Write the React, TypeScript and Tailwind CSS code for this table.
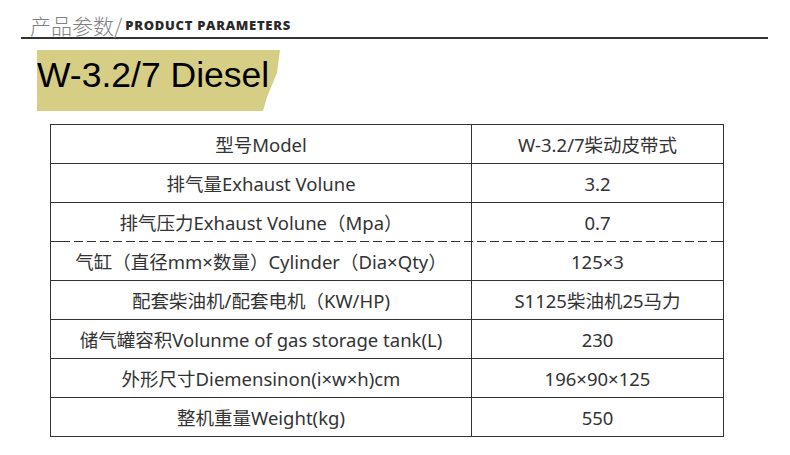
import React from "react";

const rows: [string, string][] = [
  ["型号Model", "W-3.2/7柴动皮带式"],
  ["排气量Exhaust Volune", "3.2"],
  ["排气压力Exhaust Volune（Mpa）", "0.7"],
  ["气缸（直径mm×数量）Cylinder（Dia×Qty）", "125×3"],
  ["配套柴油机/配套电机（KW/HP)", "S1125柴油机25马力"],
  ["储气罐容积Volunme of gas storage tank(L)", "230"],
  ["外形尺寸Diemensinon(i×w×h)cm", "196×90×125"],
  ["整机重量Weight(kg)", "550"],
];

export default function App() {
  return (
    <div className="w-[790px] h-[455px] bg-white overflow-hidden relative">
      <div className="pl-[30px] pt-[8px] flex items-end h-[36px]">
        <span
          className="text-[21px] leading-none text-[#808080] font-light"
          style={{ fontFamily: '"Noto Sans CJK SC", sans-serif' }}
        >
          产品参数/
        </span>
        <span
          className="ml-[3px] mb-[4px] text-[13px] leading-none font-extrabold tracking-[0.7px] text-[#2a2a2a]"
          style={{ fontFamily: '"Open Sans", Lato, sans-serif' }}
        >
          PRODUCT PARAMETERS
        </span>
      </div>
      <div className="ml-[21px] mt-[1px] w-[747px] h-[2px] bg-[#333]" />
      <div className="ml-[37px] mt-[11px] w-[243px] h-[61px] bg-[#d6ce85] pt-[8px] [clip-path:polygon(0_0,243px_0,240px_23px,230px_47px,226px_61px,0_61px)]">
        <div
          className="text-[35.5px] leading-none text-black whitespace-nowrap"
          style={{ fontFamily: '"Liberation Sans", Arial, sans-serif' }}
        >
          W-3.2/7 Diesel
        </div>
      </div>
      <div
        className="ml-[50px] mt-[13px] w-[674px] border border-[#333] text-[#333] text-[18.5px]"
        style={{ fontFamily: '"Noto Sans", "Noto Sans CJK SC", sans-serif' }}
      >
        {rows.map(([a, b], i) => (
          <div key={i} className="relative">
            <div
              className={
                i < rows.length - 1
                  ? "flex h-[39px] border-b border-[#333]"
                  : "flex h-[38px]"
              }
            >
              <div className="w-[421px] border-r border-[#333] flex items-center justify-center pt-[2px] whitespace-nowrap">
                {a}
              </div>
              <div className="flex-1 flex items-center justify-center pt-[2px] whitespace-nowrap">
                {b}
              </div>
            </div>
            {i === 2 && (
              <div className="absolute left-[10px] right-[10px] bottom-[0px] h-[1px] bg-[repeating-linear-gradient(90deg,transparent_0_9px,white_9px_13px)]" />
            )}
          </div>
        ))}
      </div>
    </div>
  );
}
